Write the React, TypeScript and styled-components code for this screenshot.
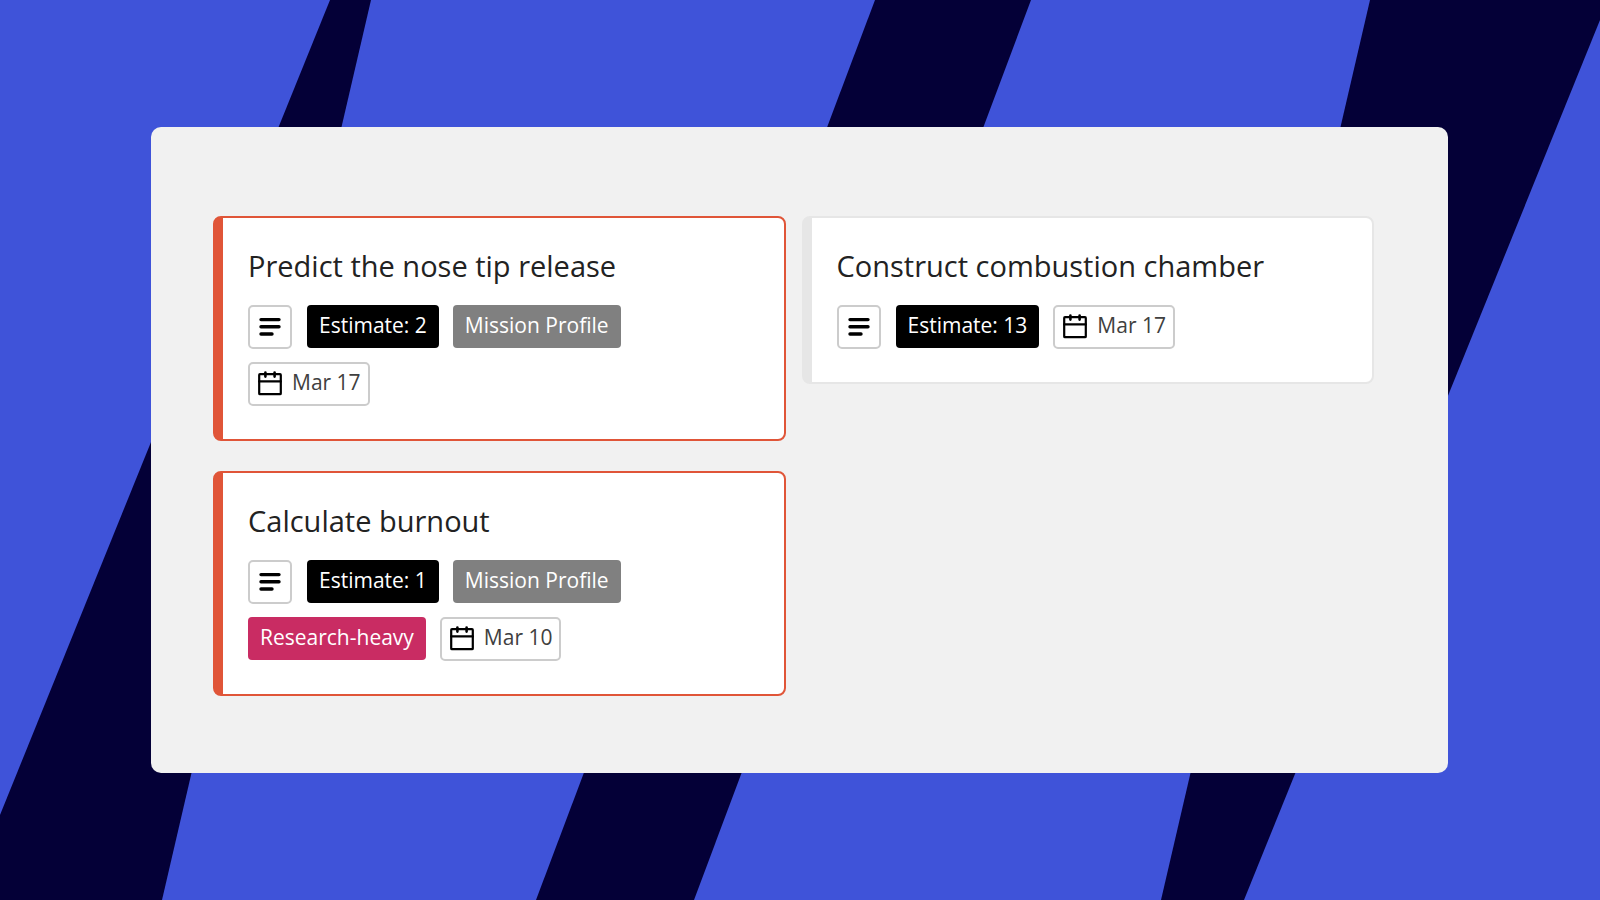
import React from "react";
import styled, { createGlobalStyle } from "styled-components";

const GlobalStyle = createGlobalStyle`
  *, *::before, *::after { box-sizing: border-box; }
  body {
    margin: 0;
    background: #3f53d9;
    font-family: "Open Sans", "Noto Sans", sans-serif;
  }
`;

const Page = styled.div`
  display: grid;
  min-height: 100vh;
`;

const Backdrop = styled.svg`
  grid-area: 1 / 1;
  display: block;
  width: 100%;
  height: 100%;
  min-height: 0;
`;

const Stage = styled.main`
  grid-area: 1 / 1;
  display: grid;
  padding: 127px 152px 127px 151px;
`;

const Board = styled.section`
  display: grid;
  grid-template-columns: 1fr 1fr;
  gap: 16px;
  align-items: start;
  padding: 89px 74px 76px 62px;
  border-radius: 10px;
  background: #f1f1f1;
`;

const Column = styled.div`
  display: flex;
  flex-direction: column;
  gap: 30px;
`;

const CardBox = styled.article<{ $accent: string }>`
  padding: 28px 36px 33px 25px;
  border: 2px solid ${(p) => p.$accent};
  border-left-width: 10px;
  border-radius: 8px;
  background: #fff;
`;

const Title = styled.h2`
  margin: 0 0 19px;
  color: #222;
  font-size: 29px;
  font-weight: 400;
  line-height: 40px;
`;

const Tags = styled.ul`
  display: flex;
  flex-wrap: wrap;
  gap: 13px 14px;
  margin: 0;
  padding: 0;
  list-style: none;
`;

const Tag = styled.li<{ $color: string }>`
  height: 43px;
  padding: 0 12px;
  border-radius: 4px;
  background: ${(p) => p.$color};
  color: #fff;
  font-size: 21px;
  line-height: 40px;
`;

const OutlineTag = styled.li`
  display: flex;
  align-items: center;
  gap: 10px;
  height: 44px;
  padding: 0 7px 0 8px;
  border: 2px solid #ccc;
  border-radius: 5px;
  color: #404040;
  font-size: 21px;
`;

const NoteTag = styled(OutlineTag)`
  justify-content: center;
  width: 44px;
  margin-right: 1px;
  padding: 0;
`;

const DateText = styled.time`
  height: 40px;
  line-height: 36px;
`;

const NoteIcon = () => (
  <svg width="24" height="24" viewBox="0 0 24 24" fill="none" stroke="#000" strokeWidth="3.4" strokeLinecap="round" role="img" aria-label="Has description">
    <path d="M3 4.6h18M3 11.8h18M3 19h11" />
  </svg>
);

const CalendarIcon = () => (
  <svg width="24" height="26" viewBox="0 0 24 26" fill="none" stroke="#000" strokeWidth="2.2" strokeLinecap="round" strokeLinejoin="round" aria-hidden="true">
    <rect x="1.2" y="3.2" width="21.6" height="20" rx="0.8" />
    <path d="M1.2 10.4h21.6" />
    <path d="M7.4 1.6v4M16.6 1.6v4" strokeWidth="2.6" />
  </svg>
);

type Label = { text: string; color: string };
type Task = { title: string; accent: string; labels: Label[]; date: string };

const RED = "#e05538";
const mission: Label = { text: "Mission Profile", color: "#808080" };

const columns: Task[][] = [
  [
    {
      title: "Predict the nose tip release",
      accent: RED,
      labels: [{ text: "Estimate: 2", color: "#000" }, mission],
      date: "Mar 17",
    },
    {
      title: "Calculate burnout",
      accent: RED,
      labels: [{ text: "Estimate: 1", color: "#000" }, mission, { text: "Research-heavy", color: "#c92c63" }],
      date: "Mar 10",
    },
  ],
  [
    {
      title: "Construct combustion chamber",
      accent: "#e6e6e6",
      labels: [{ text: "Estimate: 13", color: "#000" }],
      date: "Mar 17",
    },
  ],
];

const Card = ({ task }: { task: Task }) => (
  <CardBox $accent={task.accent}>
    <Title>{task.title}</Title>
    <Tags>
      <NoteTag>
        <NoteIcon />
      </NoteTag>
      {task.labels.map((label) => (
        <Tag key={label.text} $color={label.color}>
          {label.text}
        </Tag>
      ))}
      <OutlineTag>
        <CalendarIcon />
        <DateText>{task.date}</DateText>
      </OutlineTag>
    </Tags>
  </CardBox>
);

export default function App() {
  return (
    <Page>
      <GlobalStyle />
      <Backdrop viewBox="0 0 1600 900" preserveAspectRatio="none" fill="#040037" aria-hidden="true">
        <path d="M330 0H371L162 900H0V815z" />
        <path d="M875 0H1031L694 900H536z" />
        <path d="M1370 0H1600V20L1244 900H1161z" />
      </Backdrop>
      <Stage>
        <Board>
          {columns.map((tasks, i) => (
            <Column key={i}>
              {tasks.map((task) => (
                <Card key={task.title} task={task} />
              ))}
            </Column>
          ))}
        </Board>
      </Stage>
    </Page>
  );
}
